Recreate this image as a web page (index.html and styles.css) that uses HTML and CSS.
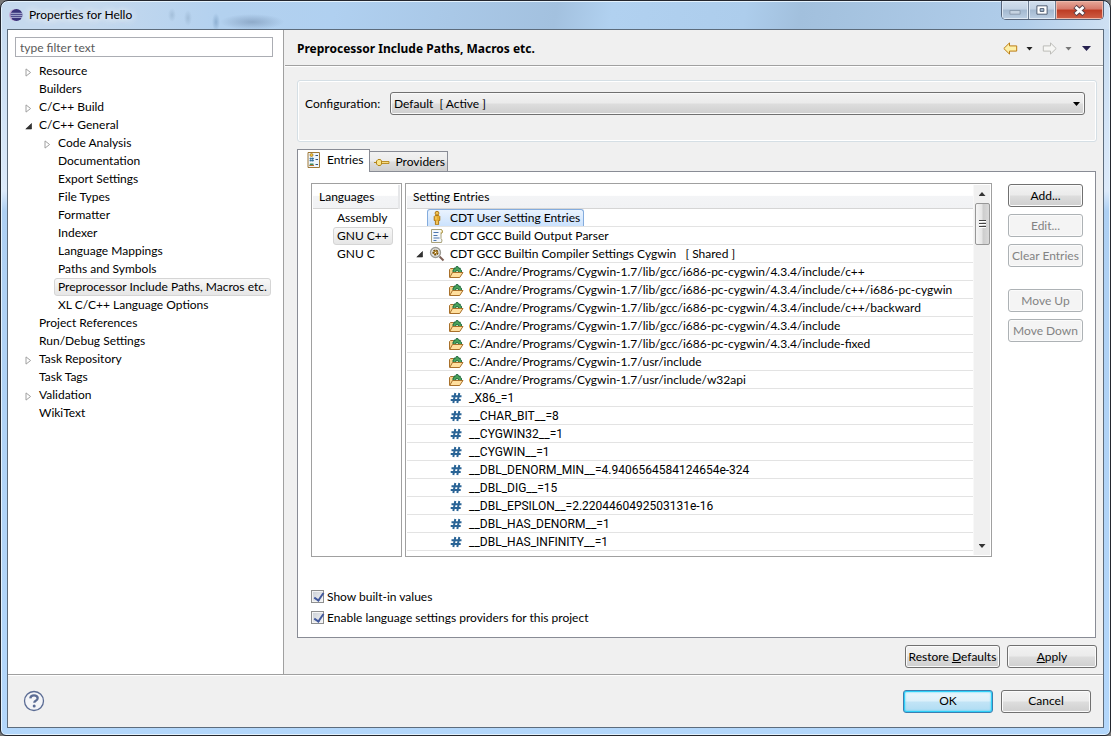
FILE: index.html
```html
<!DOCTYPE html>
<html lang="en">
<head>
<meta charset="utf-8">
<title>Properties for Hello</title>
<link rel="stylesheet" href="styles.css">
</head>
<body>
<svg class="defs" aria-hidden="true">
  <symbol id="closed" viewBox="0 0 7 9"><path d="M1 .9v7.2L5.600 4.500z" fill="#fff" stroke="#a0a0a0"/></symbol>
  <symbol id="open" viewBox="0 0 7 9"><path d="M6.500 1.500v5.500H.8z" fill="#333" stroke="#222" stroke-width=".6"/></symbol>
  <symbol id="hash" viewBox="0 0 16 16"><path d="M7.300 3 5.300 13M11.300 3 9.300 13M3.500 6.200h10M2.700 10h10" fill="none" stroke="#2a6496" stroke-width="2"/></symbol>
  <symbol id="folder" viewBox="0 0 16 16">
    <path d="M1.500 13V5.500l1-1h3l1 1h5V13z" fill="#f6d28b" stroke="#a9702a"/>
    <path d="M5 8.500V6l1-.5V4l1.500.3.8-1.800h1.600l.8 1.800 1.500-.3v1.500l1.300.8v2.200z" fill="#4aa35a" stroke="#17623a" stroke-width=".9"/>
    <path d="M7.500 8a1.600 1.600 0 0 1 3.200 0" fill="#c9e8c5" stroke="#17623a" stroke-width=".8"/>
    <path d="M1.700 13.500 4.500 8.500H15l-3.300 5z" fill="#ffdf9e" stroke="#a9702a"/>
  </symbol>
  <symbol id="person" viewBox="0 0 16 16">
    <circle cx="8" cy="3.200" r="1.900" fill="#f1c453" stroke="#a8700f" stroke-width=".9"/>
    <path d="M6.200 5.500h3.600l1 1v4H9.600v4H6.400v-4H5.200v-4z" fill="#e8ae2e" stroke="#a8700f" stroke-width=".9"/>
    <path d="M8 11v3.500M7 6.500v3" stroke="#fbe39a" stroke-width=".8"/>
  </symbol>
  <symbol id="script" viewBox="0 0 16 16">
    <path d="M2.500 1.500h10l1 1.500-.5 2-1 .5v5l1 1.500-.5 2.500h-10z" fill="#f3f8fc" stroke="#a9a27a"/>
    <path d="M12 1.500q2.500 1 1 3.500h-1.500" fill="#fff6cf" stroke="#b29a4c"/>
    <path d="M4.500 4.500h5M4.500 7.500h4M4.500 10h6M4.500 12.500h3" stroke="#4c76ad"/>
  </symbol>
  <symbol id="lens" viewBox="0 0 16 16">
    <path d="m10.500 10.500 4 4" stroke="#7d5f55" stroke-width="2"/>
    <circle cx="6.500" cy="6.500" r="5" fill="#e4e6e8" stroke="#9c9c94" stroke-width="1.300"/>
    <circle cx="6.500" cy="6.500" r="2.300" fill="#f0c14b" stroke="#77500c" stroke-width="1.600" stroke-dasharray="1.900 .7"/>
    <circle cx="6.500" cy="6.500" r="1" fill="#fff" stroke="#77500c" stroke-width=".7"/>
  </symbol>
  <symbol id="entries" viewBox="0 0 16 16">
    <path d="M2 .5h11.500v15H2z" fill="#eef5fc" stroke="#a07936"/>
    <circle cx="5.500" cy="3" r="1.500" fill="#f0c03c" stroke="#9c7113" stroke-width=".7"/>
    <path d="M4.800 5.500v4M6.700 5.500v4M3.500 6.600h4.500M3.500 8.600h4.500" stroke="#2b6a9b" stroke-width=".9"/>
    <path d="M4 11.500h3.500V14H3.500z" fill="#3c8b5c"/><path d="M3.500 13.500h4.500" stroke="#bd6a2f"/>
    <path d="M9.500 3.500H12M9.500 7.500H12M9.500 12.500H12" stroke="#33537e"/>
  </symbol>
  <symbol id="plug" viewBox="0 0 16 16">
    <path d="M5 7.500h10v2H5z" fill="#f8dc81" stroke="#b3861a" stroke-width=".9"/>
    <path d="M0 8.500h3" stroke="#b3861a"/>
    <path d="M2.500 7 4 5.500h2.500l1 1.500v3l-1 1.500H4L2.500 10z" fill="#fae58c" stroke="#b3861a"/>
  </symbol>
  <symbol id="left" viewBox="0 0 15 13"><path d="M.8 6.500 6.500.9v3h7.200v5.200H6.500v3z"/></symbol>
  <symbol id="right" viewBox="0 0 15 13"><path d="M14.200 6.500 8.500.9v3H1.300v5.200h7.200v3z"/></symbol>
</svg>

<div class="window">
  <header class="titlebar">
    <svg class="logo" viewBox="0 0 14 14" aria-hidden="true"><circle cx="6" cy="7" r="5.900" fill="#c3a7d2"/><circle cx="7.500" cy="7" r="6" fill="#39327a"/><path d="M1.800 5.300h11.500M1.500 7.300h12M2 9.300h11" stroke="#c5cbea" stroke-width=".9"/></svg>
    <h1>Properties for Hello</h1>
    <div class="glass" aria-hidden="true"></div>
    <div class="caption">
      <button class="cap" aria-label="Minimize" disabled><svg viewBox="0 0 28 18"><path d="M8.500 9.500h11v4h-11z" fill="#c6d3e2" stroke="#8796aa"/></svg></button>
      <button class="cap" aria-label="Maximize"><svg viewBox="0 0 28 18"><path d="M8.500 4.500h11v9h-11zM12 7.500h4v3h-4z" fill="#fff" fill-rule="evenodd" stroke="#45546a"/></svg></button>
      <button class="cap close" aria-label="Close"><svg viewBox="0 0 46 18"><path d="m18.500 5.500 9 8M27.500 5.500l-9 8" stroke="#5a4149" stroke-width="4.800"/><path d="m19 6 8 7M27 6l-8 7" stroke="#fff" stroke-width="2.800"/></svg></button>
    </div>
  </header>

  <div class="client">
    <div class="main">
      <nav class="sidebar">
        <input class="filter" type="text" placeholder="type filter text" aria-label="Filter">
        <ul class="tree">
          <li><div class="node"><svg class="twisty"><use href="#closed"/></svg><span>Resource</span></div></li>
          <li><div class="node"><i class="twisty"></i><span>Builders</span></div></li>
          <li><div class="node"><svg class="twisty"><use href="#closed"/></svg><span>C/C++ Build</span></div></li>
          <li><div class="node"><svg class="twisty"><use href="#open"/></svg><span>C/C++ General</span></div>
            <ul>
              <li><div class="node"><svg class="twisty"><use href="#closed"/></svg><span>Code Analysis</span></div></li>
              <li><div class="node"><i class="twisty"></i><span>Documentation</span></div></li>
              <li><div class="node"><i class="twisty"></i><span>Export Settings</span></div></li>
              <li><div class="node"><i class="twisty"></i><span>File Types</span></div></li>
              <li><div class="node"><i class="twisty"></i><span>Formatter</span></div></li>
              <li><div class="node"><i class="twisty"></i><span>Indexer</span></div></li>
              <li><div class="node"><i class="twisty"></i><span>Language Mappings</span></div></li>
              <li><div class="node"><i class="twisty"></i><span>Paths and Symbols</span></div></li>
              <li><div class="node"><i class="twisty"></i><span class="picked">Preprocessor Include Paths, Macros etc.</span></div></li>
              <li><div class="node"><i class="twisty"></i><span>XL C/C++ Language Options</span></div></li>
            </ul>
          </li>
          <li><div class="node"><i class="twisty"></i><span>Project References</span></div></li>
          <li><div class="node"><i class="twisty"></i><span>Run/Debug Settings</span></div></li>
          <li><div class="node"><svg class="twisty"><use href="#closed"/></svg><span>Task Repository</span></div></li>
          <li><div class="node"><i class="twisty"></i><span>Task Tags</span></div></li>
          <li><div class="node"><svg class="twisty"><use href="#closed"/></svg><span>Validation</span></div></li>
          <li><div class="node"><i class="twisty"></i><span>WikiText</span></div></li>
        </ul>
      </nav>

      <section class="page">
        <div class="pagehead">
          <h2>Preprocessor Include Paths, Macros etc.</h2>
          <div class="history">
            <button class="tool back" aria-label="Back"><svg><use href="#left"/></svg></button>
            <button class="tool drop" aria-label="Back history"></button>
            <button class="tool forward" aria-label="Forward"><svg><use href="#right"/></svg></button>
            <button class="tool drop dim" aria-label="Forward history"></button>
            <button class="tool drop menu" aria-label="Menu"></button>
          </div>
        </div>

        <div class="pagebody">
          <div class="config">
            <label for="config">Configuration:</label>
            <div class="combo"><select id="config"><option>Default&nbsp; [ Active ]</option></select></div>
          </div>

          <div class="tabs" role="tablist">
            <button class="tab active" role="tab" aria-selected="true"><svg class="icon"><use href="#entries"/></svg>Entries</button>
            <button class="tab" role="tab" aria-selected="false"><svg class="icon"><use href="#plug"/></svg>Providers</button>
          </div>

          <div class="panel" role="tabpanel">
            <div class="columns">
              <div class="box languages">
                <table>
                  <thead><tr><th>Languages</th></tr></thead>
                  <tbody>
                    <tr><td><span>Assembly</span></td></tr>
                    <tr><td><span class="picked">GNU C++</span></td></tr>
                    <tr><td><span>GNU C</span></td></tr>
                  </tbody>
                </table>
              </div>
              <div class="box settings">
                <table>
                  <thead><tr><th>Setting Entries</th></tr></thead>
                  <tbody>
                    <tr><td><div class="row"><i class="twisty"></i><span class="item chosen"><svg class="icon"><use href="#person"/></svg>CDT User Setting Entries</span></div></td></tr>
                    <tr><td><div class="row"><i class="twisty"></i><span class="item"><svg class="icon"><use href="#script"/></svg>CDT GCC Build Output Parser</span></div></td></tr>
                    <tr><td><div class="row"><svg class="twisty"><use href="#open"/></svg><span class="item"><svg class="icon"><use href="#lens"/></svg>CDT GCC Builtin Compiler Settings Cygwin &nbsp; [ Shared ]</span></div></td></tr>
                    <tr><td><div class="row child"><span class="item"><svg class="icon"><use href="#folder"/></svg>C:/Andre/Programs/Cygwin-1.7/lib/gcc/i686-pc-cygwin/4.3.4/include/c++</span></div></td></tr>
                    <tr><td><div class="row child"><span class="item"><svg class="icon"><use href="#folder"/></svg>C:/Andre/Programs/Cygwin-1.7/lib/gcc/i686-pc-cygwin/4.3.4/include/c++/i686-pc-cygwin</span></div></td></tr>
                    <tr><td><div class="row child"><span class="item"><svg class="icon"><use href="#folder"/></svg>C:/Andre/Programs/Cygwin-1.7/lib/gcc/i686-pc-cygwin/4.3.4/include/c++/backward</span></div></td></tr>
                    <tr><td><div class="row child"><span class="item"><svg class="icon"><use href="#folder"/></svg>C:/Andre/Programs/Cygwin-1.7/lib/gcc/i686-pc-cygwin/4.3.4/include</span></div></td></tr>
                    <tr><td><div class="row child"><span class="item"><svg class="icon"><use href="#folder"/></svg>C:/Andre/Programs/Cygwin-1.7/lib/gcc/i686-pc-cygwin/4.3.4/include-fixed</span></div></td></tr>
                    <tr><td><div class="row child"><span class="item"><svg class="icon"><use href="#folder"/></svg>C:/Andre/Programs/Cygwin-1.7/usr/include</span></div></td></tr>
                    <tr><td><div class="row child"><span class="item"><svg class="icon"><use href="#folder"/></svg>C:/Andre/Programs/Cygwin-1.7/usr/include/w32api</span></div></td></tr>
                    <tr><td><div class="row child macro"><span class="item"><svg class="icon"><use href="#hash"/></svg>_X86_=1</span></div></td></tr>
                    <tr><td><div class="row child macro"><span class="item"><svg class="icon"><use href="#hash"/></svg>__CHAR_BIT__=8</span></div></td></tr>
                    <tr><td><div class="row child macro"><span class="item"><svg class="icon"><use href="#hash"/></svg>__CYGWIN32__=1</span></div></td></tr>
                    <tr><td><div class="row child macro"><span class="item"><svg class="icon"><use href="#hash"/></svg>__CYGWIN__=1</span></div></td></tr>
                    <tr><td><div class="row child macro"><span class="item"><svg class="icon"><use href="#hash"/></svg>__DBL_DENORM_MIN__=4.9406564584124654e-324</span></div></td></tr>
                    <tr><td><div class="row child macro"><span class="item"><svg class="icon"><use href="#hash"/></svg>__DBL_DIG__=15</span></div></td></tr>
                    <tr><td><div class="row child macro"><span class="item"><svg class="icon"><use href="#hash"/></svg>__DBL_EPSILON__=2.2204460492503131e-16</span></div></td></tr>
                    <tr><td><div class="row child macro"><span class="item"><svg class="icon"><use href="#hash"/></svg>__DBL_HAS_DENORM__=1</span></div></td></tr>
                    <tr><td><div class="row child macro"><span class="item"><svg class="icon"><use href="#hash"/></svg>__DBL_HAS_INFINITY__=1</span></div></td></tr>
                  </tbody>
                </table>
                <div class="scrollbar" aria-hidden="true">
                  <i class="step up"></i><i class="thumb"><i></i><i></i><i></i></i><i class="step down"></i>
                </div>
              </div>
              <div class="actions">
                <button class="btn">Add...</button>
                <button class="btn" disabled>Edit...</button>
                <button class="btn" disabled>Clear Entries</button>
                <button class="btn apart" disabled>Move Up</button>
                <button class="btn" disabled>Move Down</button>
              </div>
            </div>
            <div class="checks">
              <label><input type="checkbox" checked>Show built-in values</label>
              <label><input type="checkbox" checked>Enable language settings providers for this project</label>
            </div>
          </div>

          <div class="applybar">
            <button class="btn restore">Restore <u>D</u>efaults</button>
            <button class="btn wide"><u>A</u>pply</button>
          </div>
        </div>
      </section>
    </div>

    <footer class="footer">
      <button class="help" aria-label="Help"><svg viewBox="0 0 22 22"><circle cx="11" cy="11" r="9.500" fill="#f4f5f8" stroke="#5b6c94" stroke-width="1.300"/><path d="M7.300 8.300q.3-3 3.700-3t3.700 2.700q0 1.700-1.900 2.700-1.500.8-1.500 2" fill="none" stroke="#5b6c94" stroke-width="2.300"/><circle cx="11.200" cy="16" r="1.500" fill="#5b6c94"/></svg></button>
      <button class="btn wide default">OK</button>
      <button class="btn wide">Cancel</button>
    </footer>
  </div>
</div>
</body>
</html>
```
FILE: styles.css
```css
* { box-sizing: border-box; }

body {
  margin: 0;
  background: #777;
  font: 12px/18px Lato, "Open Sans", sans-serif;
  color: #000;
}

button, input, select { font: inherit; color: inherit; margin: 0; padding: 0; }
ul { list-style: none; margin: 0; padding: 0; }
table { border-collapse: collapse; width: 100%; }
th { font-weight: normal; text-align: left; }
td, th { padding: 0; }

.defs { position: absolute; width: 0; height: 0; }
.icon { width: 16px; height: 16px; flex: none; }

/* Window frame */
.window {
  min-height: 100vh;
  display: flex;
  flex-direction: column;
  padding: 0 6px 7px;
  border: 1px solid #23262e;
  border-radius: 8px 8px 6px 6px;
  box-shadow: inset 0 0 0 1px #e4f2fd;
  background: linear-gradient(#c3d9ef, #dceafa 190px, #aed0f3 210px, #b3d7fb);
}

.titlebar {
  display: flex;
  align-items: flex-start;
  height: 27px;
  margin: 1px -5px 0;
  background: linear-gradient(100deg, #c5d9ee 8%, #b3d1ef 20%, #b0d0f0 30%, #a3c1df 50%, #b1d1f0 55%, #adcdec 67%, #a2c0dd 72%, #b0cdea 92%, #cfe1f3);
  border-radius: 6px 6px 0 0;
}
.logo { width: 14px; height: 14px; margin: 6px 6px 0 7px; }
.titlebar h1 { margin: 4px 0 0; font-size: 12px; font-weight: normal; text-shadow: 0 0 8px #fff, 0 0 8px #fff; }
.glass {
  flex: 1;
  align-self: stretch;
  background:
    radial-gradient(ellipse 32px 8px at 120px 20px, #6f89a988, transparent),
    radial-gradient(ellipse 4px 9px at 84px 20px, #6f94ba88, transparent),
    radial-gradient(ellipse 4px 8px at 56px 16px, #90acc888, transparent),
    radial-gradient(ellipse 4px 7px at 40px 13px, #90acc888, transparent);
}

.caption {
  display: flex;
  height: 19px;
  margin: -1px 5px 0 0;
  border: 1px solid #56647a;
  border-top: 0;
  border-radius: 0 0 5px 5px;
  overflow: hidden;
}
.cap {
  width: 27px;
  border: 0;
  border-right: 1px solid #6c7c91;
  background: linear-gradient(#d3e0ee, #c2d2e4 45%, #a3b8d0 50%, #bccfe3);
  box-shadow: inset 0 0 0 1px #e0eaf5;
}
.cap svg { display: block; width: 100%; height: 18px; }
.cap.close {
  width: 47px;
  border-right: 0;
  background: linear-gradient(#e7a99a, #d6796a 45%, #bd3b23 50%, #cf6047);
  box-shadow: inset 0 0 0 1px #eeb9ab;
}

.client {
  flex: 1;
  display: flex;
  flex-direction: column;
  border: 1px solid #5d6c7c;
  background: #f0f0f0;
}
.main { flex: 1; display: flex; }

/* Category tree */
.sidebar {
  flex: none;
  width: 276px;
  padding: 7px 10px 0 7px;
  background: #fff;
  border-right: 1px solid #a0a0a0;
}
.filter {
  display: block;
  width: 100%;
  height: 20px;
  padding: 0 4px;
  border: 1px solid #abadb3;
  border-radius: 0;
  background: #fff;
}
.filter::placeholder { color: #5a5a5a; opacity: 1; }
.tree { padding: 5px 0 0 5px; }
.tree ul { padding-left: 19px; }
.node { display: flex; align-items: center; height: 18px; }
.node .twisty { flex: none; width: 7px; height: 9px; margin: 2px 3px 0 5px; }
.node span, .languages td span {
  padding: 0 3px;
  border: 1px solid transparent;
  line-height: 16px;
  white-space: nowrap;
}
.node .picked, .languages td .picked {
  border-color: #d5d5d5;
  border-radius: 3px;
  background: linear-gradient(#f8f8f8, #e6e6e6);
}

/* Page */
.page { flex: 1; min-width: 0; display: flex; flex-direction: column; margin-left: 1px; }
.pagehead {
  display: flex;
  align-items: center;
  justify-content: space-between;
  height: 36px;
  padding: 2px 12px 0;
  border-bottom: 1px solid #a0a0a0;
  box-shadow: 0 1px #fff;
}
.pagehead h2 { margin: 0; font: bold 12px/18px "Noto Sans", "Open Sans", sans-serif; }
.history { display: flex; align-items: center; }
.tool { display: block; border: 0; background: none; }
.tool svg { display: block; width: 15px; height: 13px; }
.back { fill: #fdf0a8; stroke: #bd7d13; }
.forward { fill: #f6f6f4; stroke: #bcbcb8; margin-left: 9px; }
.drop {
  width: 7px;
  height: 4px;
  margin-left: 8px;
  background: #222;
  clip-path: polygon(0 0, 100% 0, 50% 100%);
}
.drop.dim { background: #777; }
.drop.menu { width: 9px; height: 5px; margin-left: 10px; background: #26214f; }

.pagebody { flex: 1; display: flex; flex-direction: column; padding: 14px 6px 6px 12px; }
.config {
  display: flex;
  align-items: flex-start;
  height: 62px;
  padding: 11px 11px 0 7px;
  border: 1px solid #d5dfe5;
  border-radius: 3px;
  box-shadow: inset 0 0 0 1px #fff;
}
.config label { margin: 3px 8px 0 0; width: 77px; white-space: nowrap; }
.combo { position: relative; flex: 1; }
.combo select {
  display: block;
  appearance: none;
  width: 100%;
  height: 23px;
  padding: 0 20px 0 3px;
  border: 1px solid #707070;
  border-radius: 3px;
  background: linear-gradient(#f2f2f2, #ebebeb 48%, #dddddd 52%, #cfcfcf);
  box-shadow: inset 0 0 0 1px #f9f9f9;
}
.combo::after {
  content: "";
  position: absolute;
  right: 5px;
  top: 10px;
  width: 7px;
  height: 4px;
  background: #000;
  clip-path: polygon(0 0, 100% 0, 50% 100%);
}

/* Tabs */
.tabs { display: flex; align-items: flex-end; height: 22px; margin-top: 7px; }
.tab {
  display: flex;
  align-items: center;
  gap: 5px;
  height: 20px;
  padding: 0 2px 0 4px;
  border: 1px solid #898c95;
  border-left: 0;
  border-bottom: 0;
  background: linear-gradient(#f2f2f2, #ebebeb 48%, #dddddd 52%, #cfcfcf);
}
.tab.active {
  position: relative;
  height: 23px;
  margin-bottom: -1px;
  padding: 0 6px 2px 8px;
  border-left: 1px solid #898c95;
  background: #fff;
}
.panel {
  flex: 1;
  margin-right: 1px;
  padding: 11px 12px 9px 13px;
  border: 1px solid #898c95;
  background: #fff;
}
.columns { display: flex; }

.box { height: 374px; border: 1px solid #a0a0a0; padding: 1px; background: #fff; overflow: hidden; }
.box th {
  height: 23px;
  padding: 1px 0 0 6px;
  border-bottom: 1px solid #d5d5d5;
  background: linear-gradient(#fff 45%, #f3f4f6 50%, #f1f2f4);
}
.languages { flex: none; width: 91px; margin-right: 3px; }
.languages th { border-right: 2px solid #e6e7e9; }
.languages td { height: 18px; line-height: 16px; padding-left: 20px; }
.languages td span { display: inline-block; }

.settings { flex: 1; min-width: 0; display: flex; }
.settings table { flex: 1; width: auto; align-self: flex-start; }
.settings td { border-bottom: 1px solid #e3e3e3; }
.row { display: flex; align-items: center; height: 17px; white-space: nowrap; }
.row .twisty { flex: none; width: 7px; height: 9px; margin: 3px 4px 0 9px; }
.row.child { padding-left: 39px; }
.row.macro { font-family: Roboto, sans-serif; }
.item {
  display: flex;
  align-items: center;
  gap: 5px;
  height: 17px;
  padding: 1px 3px 0 1px;
  border: 1px solid transparent;
  border-bottom: 0;
}
.item.chosen {
  border-color: #84acdd;
  border-radius: 3px 3px 0 0;
  background: linear-gradient(#eaf3fe, #cbe2fd);
}

.scrollbar {
  flex: none;
  width: 17px;
  display: flex;
  flex-direction: column;
  align-items: center;
  background: #f0f0f0;
  border-left: 1px solid #f8f8f8;
}
.step { width: 7px; height: 4px; background: #333; }
.up { margin: 7px 0; clip-path: polygon(50% 0, 100% 100%, 0 100%); }
.down { margin: auto 0 7px; clip-path: polygon(0 0, 100% 0, 50% 100%); }
.thumb {
  display: flex;
  flex-direction: column;
  align-items: center;
  justify-content: center;
  gap: 1px;
  width: 15px;
  height: 42px;
  border: 1px solid #979797;
  border-radius: 2px;
  background: linear-gradient(90deg, #f5f5f5, #e6e6e6 45%, #cdcdcd 55%, #dadada);
}
.thumb i { width: 7px; height: 2px; border-bottom: 1px solid #fff; background: #444; }

/* Buttons */
.btn {
  display: block;
  height: 23px;
  border: 1px solid #707070;
  border-radius: 3px;
  background: linear-gradient(#f2f2f2, #ebebeb 48%, #dddddd 52%, #cfcfcf);
  box-shadow: inset 0 0 0 1px #fbfbfb;
  white-space: nowrap;
}
.btn:disabled { border-color: #adb2b5; background: #f4f4f4; color: #838383; }
.btn.wide { width: 90px; }
.btn.restore { width: 95px; }
.btn.default {
  border-color: #3c7fb1;
  background: linear-gradient(#eaf6fc, #dcf0fa 48%, #c2e4f6 52%, #aedcf3);
  box-shadow: inset 0 0 0 1px #2fd0f8, inset 0 0 2px 1px #2fd0f8;
}
.actions { display: flex; flex-direction: column; gap: 7px; width: 75px; margin: 1px 0 0 16px; }
.actions .apart { margin-top: 15px; }

.checks { padding-top: 29px; }
.checks label { display: flex; align-items: center; gap: 3px; width: max-content; height: 21px; }
.checks input {
  appearance: none;
  position: relative;
  width: 13px;
  height: 13px;
  border: 1px solid #8e8f8f;
  background: linear-gradient(135deg, #c9ced5, #f6f6f6);
  box-shadow: inset 0 0 0 1px #f4f4f4;
}
.checks input:checked::after {
  content: "";
  position: absolute;
  left: 4px;
  top: 0;
  width: 4px;
  height: 8px;
  border: solid #41589c;
  border-width: 0 2px 2px 0;
  transform: rotate(35deg);
}

.applybar { display: flex; justify-content: flex-end; gap: 7px; margin-top: 7px; }

.footer {
  display: flex;
  align-items: center;
  gap: 8px;
  height: 53px;
  padding: 0 12px 0 15px;
  border-top: 1px solid #a0a0a0;
  box-shadow: inset 0 1px #fff;
}
.help { width: 22px; height: 22px; margin-right: auto; border: 0; background: none; }
.help svg { display: block; width: 22px; height: 22px; }
```
